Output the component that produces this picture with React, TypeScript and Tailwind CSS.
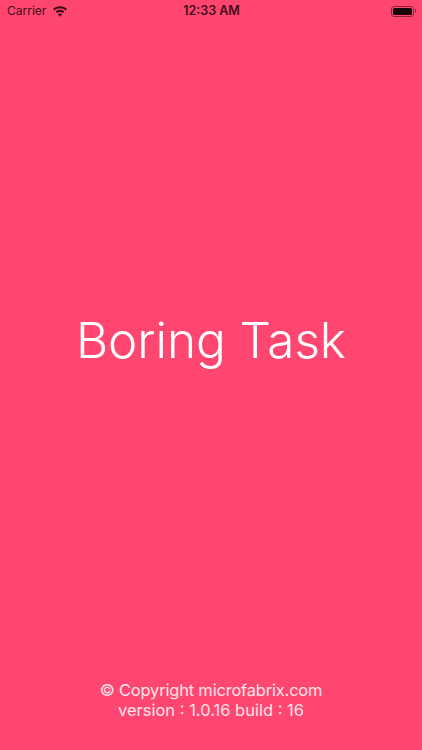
export default function App() {
  return (
    <div className="h-[750px] w-[422px] flex flex-col bg-[#fe4670] font-['Inter',sans-serif] overflow-hidden">
      {/* Status bar */}
      <div className="h-[22px] pl-[7px] pr-[6px] flex items-center justify-between text-[#3f0d1a]">
        <div className="flex-1 flex items-center gap-[7px]">
          <span className="text-[12px] leading-none">Carrier</span>
          <svg width="14" height="11" viewBox="0 0 16 12" fill="currentColor">
            <path d="M8 0C5 0 2.200 1.200 0 3.200l1.600 1.700C3.300 3.300 5.500 2.400 8 2.400s4.700.9 6.400 2.500L16 3.200C13.800 1.200 11 0 8 0z" />
            <path d="M8 4.100c-1.900 0-3.700.7-5 2l1.700 1.700C5.600 7 6.700 6.500 8 6.500s2.400.5 3.300 1.300L13 6.100c-1.300-1.300-3.100-2-5-2z" />
            <path d="M8 8.200c-1 0-1.900.4-2.500 1L8 12l2.500-2.800c-.6-.6-1.500-1-2.500-1z" />
          </svg>
        </div>
        <span className="text-[12.5px] font-semibold leading-none">12:33 AM</span>
        <div className="flex-1 flex justify-end items-center">
          <div className="w-[23px] h-[11px] rounded-[3px] border border-[#3f0d1a]/60 p-[1px]">
            <div className="h-full w-full rounded-[1.5px] bg-[#1a0509]" />
          </div>
          <div className="ml-[1px] w-[1.5px] h-[4px] rounded-r-sm bg-[#3f0d1a]/60" />
        </div>
      </div>

      {/* Title */}
      <div className="flex-1 flex items-center justify-center pb-[20px]">
        <h1 className="text-[49.5px] font-light text-white leading-none tracking-[-0.1px]">Boring Task</h1>
      </div>

      {/* Footer */}
      <div className="pb-[30px] text-center text-[16.5px] leading-[20px] text-white/85">
        <p className="tracking-[-0.2px]">© Copyright microfabrix.com</p>
        <p>version : 1.0.16 build : 16</p>
      </div>
    </div>
  );
}
